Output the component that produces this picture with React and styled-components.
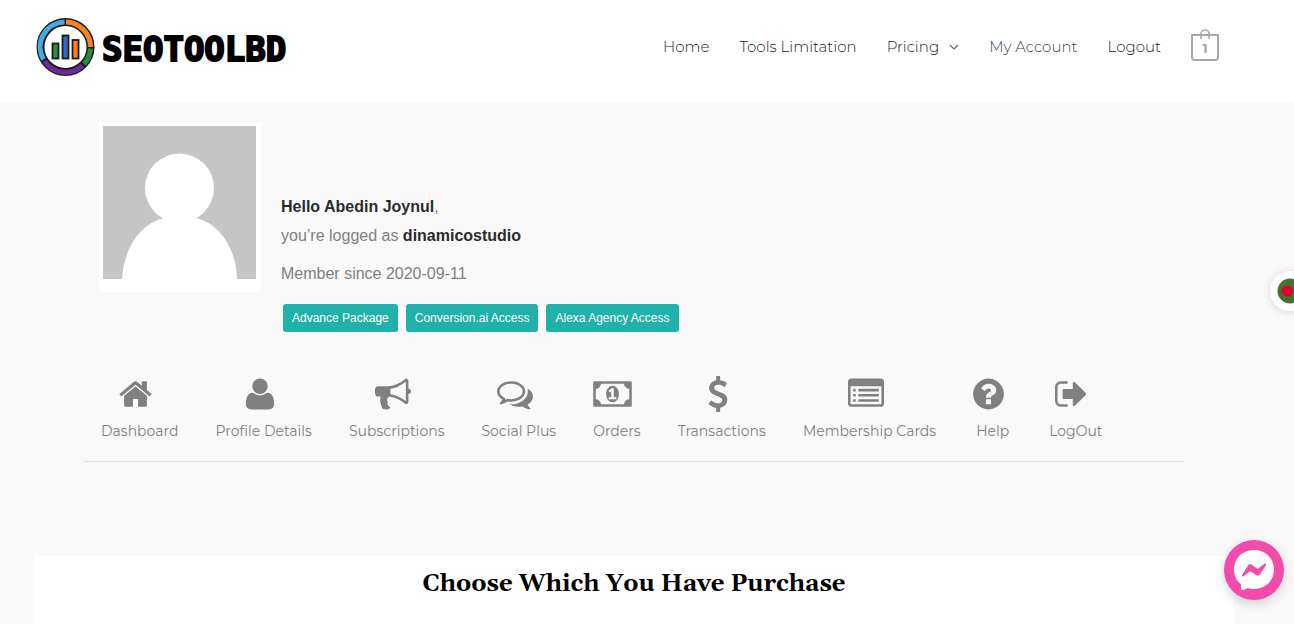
import React from "react";
import styled, { createGlobalStyle } from "styled-components";

const GlobalStyle = createGlobalStyle`
  * { box-sizing: border-box; }
  body {
    margin: 0;
    background: #f9f9f9;
    color: #808080;
    font-family: Arial, "Liberation Sans", sans-serif;
    font-size: 16px;
    overflow-x: hidden;
  }
  a { color: inherit; text-decoration: none; }
  p { margin: 0; }
`;

const brandFont = `Montserrat, Inter, sans-serif`;

const Header = styled.header`
  background: #fff;
  padding: 18px 75px 26px 36px;
  display: flex;
  align-items: center;
  justify-content: space-between;
`;

const Logo = styled.a`
  display: flex;
  align-items: center;
  gap: 7px;
`;

const Wordmark = styled.span`
  padding-top: 4px;
  color: #000;
  font: bold 34px/54px "DejaVu Sans Mono", monospace;
  -webkit-text-stroke: 2px #000;
`;

const Menu = styled.nav`
  display: flex;
  align-items: center;
  gap: 30px;
  font: 300 15px/24px ${brandFont};
  color: #222;
`;

const MenuLink = styled.a`
  display: flex;
  align-items: center;
  gap: 10px;
  white-space: nowrap;
  color: ${(p) => (p.$current ? "#3a4452" : "inherit")};
`;

const Cart = styled.a`
  position: relative;
  width: 28px;
  height: 32px;
  margin-top: -4px;
  padding-top: 7px;
  text-align: center;
  font: 700 13px/24px ${brandFont};
  color: #a3a3a3;

  svg {
    position: absolute;
    inset: 0;
  }
`;

const Page = styled.main`
  padding: 20px 60px 0 34px;
`;

const Account = styled.section`
  margin: 0 50px;
  border-bottom: 1px solid #e2e2e2;
  padding: 0 15px 20px;
`;

const Profile = styled.div`
  display: flex;
  align-items: flex-start;
  gap: 20px;
`;

const Avatar = styled.div`
  background: #fff;
  padding: 4px 5px 13px 4px;

  svg { display: block; }
`;

const Details = styled.div`
  padding-top: 70px;
  line-height: 29px;

  strong { color: #2b2b2b; }
`;

const Since = styled.p`
  padding: 9px 0 16px;
`;

const Tags = styled.div`
  display: flex;
  flex-wrap: wrap;
  gap: 8px;
  padding-left: 2px;
`;

const Tag = styled.span`
  background: #20b2aa;
  color: #fff;
  border-radius: 3px;
  padding: 0 9px;
  font-size: 12px;
  line-height: 28px;
`;

const Tabs = styled.nav`
  display: flex;
  flex-wrap: wrap;
  gap: 37px;
  padding: 44px 0 0 2px;
`;

const Tab = styled.a`
  display: flex;
  flex-direction: column;
  align-items: center;
  gap: 9px;
  font: 400 14px/20px ${brandFont};
  white-space: nowrap;

  svg {
    display: block;
    fill: #808080;
    margin-right: 8px;
  }
`;

const Panel = styled.section`
  margin-top: 94px;
  min-height: 68px;
  background: #fff;
  padding: 11px 0;
`;

const Heading = styled.h2`
  margin: 0;
  text-align: center;
  color: #000;
  font: bold 24px/34px Gelasio, Georgia, "Liberation Serif", serif;
`;

const FloatingButton = styled.button`
  position: fixed;
  display: grid;
  place-items: center;
  border: 0;
  padding: 0;
  border-radius: 50%;
`;

const ChatButton = styled(FloatingButton)`
  right: 10px;
  bottom: 24px;
  width: 60px;
  height: 60px;
  background: #f24bab;
  box-shadow: 0 4px 12px rgba(0, 0, 0, 0.16);
`;

const LanguageButton = styled(FloatingButton)`
  right: -16px;
  top: 271px;
  width: 40px;
  height: 40px;
  background: #fff;
  box-shadow: 0 1px 8px rgba(0, 0, 0, 0.14);
`;

const menuItems = [
  { label: "Home" },
  { label: "Tools Limitation" },
  { label: "Pricing", dropdown: true },
  { label: "My Account", current: true },
  { label: "Logout" },
];

const tags = ["Advance Package", "Conversion.ai Access", "Alexa Agency Access"];

const tabs = [
  {
    label: "Dashboard",
    x: 64,
    w: 1664,
    d: "M1472 992v480q0 26-19 45t-45 19h-384v-384h-256v384h-384q-26 0-45-19t-19-45v-480q0-1 .5-3t.5-3l575-474 575 474q1 2 1 6zm223-69l-62 74q-8 9-21 11h-3q-13 0-21-7l-692-577-692 577q-12 8-24 7-13-2-21-11l-62-74q-8-10-7-23.5t11-21.5l719-599q32-26 76-26t76 26l244 204v-195q0-14 9-23t23-9h192q14 0 23 9t9 23v408l219 182q10 8 11 21.5t-7 23.5z",
  },
  {
    label: "Profile Details",
    d: "M1600 1405q0 120-73 189.5t-194 69.5h-874q-121 0-194-69.5t-73-189.5q0-53 3.500-103.500t14-109 26.500-108.500 43-97.500 62-81 85.500-53.500 111.500-20q9 0 42 21.500t74.500 48 108 48 133.500 21.500 133.500-21.500 108-48 74.500-48 42-21.500q61 0 111.500 20t85.500 53.500 62 81 43 97.500 26.500 108.500 14 109 3.500 103.500zm-320-893q0 159-112.500 271.500t-271.500 112.500-271.500-112.500-112.500-271.500 112.500-271.500 271.500-112.500 271.500 112.500 112.500 271.500z",
  },
  {
    label: "Subscriptions",
    d: "M1664 640q53 0 90.5 37.5t37.5 90.5-37.5 90.5-90.5 37.5v384q0 52-38 90t-90 38q-417-347-812-380-58 19-91 66t-31 100.5 40 92.5q-20 33-23 65.500t6 58 33.500 55 48 50 61.500 50.500q-29 58-111.500 83t-168.500 11.500-132-55.500q-7-23-29.500-87.500t-32-94.500-23-89-15-101 3.500-98.500 22-110.500h-122q-66 0-113-47t-47-113v-192q0-66 47-113t113-47h480q435 0 896-384 52 0 90 38t38 90v384zm-128 604v-954q-394 302-768 343v270q377 42 768 341z",
  },
  {
    label: "Social Plus",
    d: "M704 384q-153 0-286 52t-211.5 141-78.5 191q0 82 53 158t149 132l97 56-35 84q34-20 62-39l44-31 53 10q78 14 153 14 153 0 286-52t211.5-141 78.5-191-78.5-191-211.5-141-286-52zm0-128q191 0 353.5 68.5t256.5 186.5 94 257-94 257-256.5 186.5-353.5 68.5q-86 0-176-16-124 88-278 128-36 9-86 16h-3q-11 0-20.5-8t-11.5-21q-1-3-1-6.5t.5-6.5 2-6l2.5-5 3.5-5.5 4-5 4.5-5 4-4.5q5-6 23-25t26-29.5 22.5-29 25-38.5 20.5-44q-124-72-195-177t-71-224q0-139 94-257t256.5-186.5 353.5-68.5zm822 1169q10 24 20.5 44t25 38.5 22.5 29 26 29.5 23 25q1 1 4 4.5t4.5 5 4 5 3.5 5.5l2.5 5 2 6 .5 6.5-1 6.5q-3 14-13 22t-22 7q-50-7-86-16-154-40-278-128-90 16-176 16-271 0-472-132 58 4 88 4 161 0 309-45t264-129q125-92 192-212t67-254q0-77-23-152 129 71 204 178t75 230q0 120-71 224.5t-195 176.5z",
  },
  {
    label: "Orders",
    w: 1920,
    d: "M768 1152h384v-96h-128v-448h-114l-148 137 77 80q42-37 55-57h2v288h-128v96zm512-256q0 70-21 142t-59.5 134-101.5 101-138 39-138-39-101.5-101-59.5-134-21-142 21-142 59.5-134 101.5-101 138-39 138 39 101.5 101 59.5 134 21 142zm512 256v-512q-106 0-181-75t-75-181h-1152q0 106-75 181t-181 75v512q106 0 181 75t75 181h1152q0-106 75-181t181-75zm128-832v1152q0 26-19 45t-45 19h-1792q-26 0-45-19t-19-45v-1152q0-26 19-45t45-19h1792q26 0 45 19t19 45z",
  },
  {
    label: "Transactions",
    d: "M1362 1185q0 153-99.5 263.5t-258.5 136.5v175q0 14-9 23t-23 9h-135q-13 0-22.5-9.5t-9.5-22.5v-175q-66-9-127.5-31t-101.5-44.5-74-48-46.5-37.5-17.5-18q-17-21-2-41l103-135q7-10 23-12 15-2 24 9l2 2q113 99 243 125 37 8 74 8 81 0 142.5-43t61.5-122q0-28-15-53t-33.5-42-58.5-37.5-66-32-80-32.5q-39-16-61.5-25t-61.5-26.5-62.5-31-56.5-35.5-53.5-42.5-43.5-49-35.5-58-21-66.5-8.5-78q0-138 98-242t255-134v-180q0-13 9.5-22.5t22.5-9.5h135q14 0 23 9t9 23v176q57 6 110.5 23t87 33.5 63.5 37.5 39 29 15 14q17 18 5 38l-81 146q-8 15-23 16-14 3-27-7-3-3-14.5-12t-39-26.5-58.5-32-74.5-26-85.5-11.5q-95 0-155 43t-60 111q0 26 8.5 48t29.5 41.5 39.5 33 56 31 60.5 27 70 27.5q53 20 81 31.5t76 35 75.5 42.5 62 50 53 63.5 31.5 76.5 13 94z",
  },
  {
    label: "Membership Cards",
    d: "M256 1152h128v128h-128zM256 896h128v128h-128zM256 640h128v128h-128zM512 1152h1024v128h-1024zM512 896h1024v128h-1024zM512 640h1024v128h-1024zM1664 1376v-832q0-13-9.500-22.500t-22.500-9.500h-1472q-13 0-22.500 9.500t-9.500 22.500v832q0 13 9.500 22.500t22.500 9.500h1472q13 0 22.500-9.500t9.500-22.500zm128-1088v1088q0 66-47 113t-113 47h-1472q-66 0-113-47t-47-113v-1088q0-66 47-113t113-47h1472q66 0 113 47t47 113z",
  },
  {
    label: "Help",
    x: 128,
    w: 1536,
    d: "M1024 1376v-192q0-14-9-23t-23-9h-192q-14 0-23 9t-9 23v192q0 14 9 23t23 9h192q14 0 23-9t9-23zm256-672q0-88-55.5-163t-138.5-116-170-41q-243 0-371 213-15 24 8 42l132 100q7 6 19 6 16 0 25-12 53-68 86-92 34-24 86-24 48 0 85.5 26t37.5 59q0 38-20 61t-68 45q-63 28-115.5 86.5t-52.5 125.5v36q0 14 9 23t23 9h192q14 0 23-9t9-23q0-19 21.5-49.5t54.5-49.5q32-18 49-28.500t46-35 44.500-48 28-60.500 12.500-81zm384 192q0 209-103 385.500t-279.500 279.500-385.500 103-385.500-103-279.500-279.500-103-385.500 103-385.500 279.500-279.500 385.500-103 385.500 103 279.500 279.500 103 385.500z",
  },
  {
    label: "LogOut",
    x: 64,
    w: 1664,
    d: "M704 1440q0 4 1 20t.5 26.5-3 23.5-10 19.5-20.5 6.5h-320q-119 0-203.5-84.5t-84.5-203.5v-704q0-119 84.5-203.5t203.5-84.5h320q13 0 22.5 9.5t9.5 22.5q0 4 1 20t.5 26.5-3 23.5-10 19.5-20.5 6.5h-320q-66 0-113 47t-47 113v704q0 66 47 113t113 47h312l11.5 1 11.5 3 8 5.5 7 9 2 13.5zm928-544q0 26-19 45l-544 544q-19 19-45 19t-45-19-19-45v-288h-448q-26 0-45-19t-19-45v-384q0-26 19-45t45-19h448v-288q0-26 19-45t45-19 45 19l544 544q19 19 19 45z",
  },
];

function LogoMark() {
  return (
    <svg width="59" height="58" viewBox="0 0 59 58" fill="none" aria-hidden="true">
      <circle cx="29.500" cy="29" r="25" stroke="#1c1c1c" strokeWidth="8" />
      <g strokeWidth="5">
        <path d="M30 4A25 25 0 0 1 54.500 29" stroke="#f5851f" />
        <path d="M54.500 30.500A25 25 0 0 1 48 46" stroke="#2b8a3e" />
        <path d="M46.500 47.500A25 25 0 0 1 8.500 43" stroke="#6a2a9c" />
        <path d="M7.500 41.500A25 25 0 0 1 28.500 4" stroke="#4aa8e0" />
      </g>
      <g stroke="#1c1c1c" strokeWidth="1.800">
        <rect x="16.500" y="25.500" width="6" height="15" fill="#2b8f3e" />
        <rect x="26.500" y="17.500" width="6" height="23" fill="#2f6cc4" />
        <rect x="36.500" y="22" width="6" height="18.500" fill="#f5851f" />
      </g>
    </svg>
  );
}

function TabIcon({ x = 0, w = 1792, d }) {
  return (
    <svg width={Math.round((w * 36) / 1792)} height="36" viewBox={`${x} 0 ${w} 1792`} aria-hidden="true">
      <path d={d} />
    </svg>
  );
}

export default function App() {
  return (
    <>
      <GlobalStyle />
      <Header>
        <Logo href="#">
          <LogoMark />
          <Wordmark>SEOTOOLBD</Wordmark>
        </Logo>
        <Menu aria-label="Main">
          {menuItems.map((item) => (
            <MenuLink key={item.label} href="#" $current={item.current}>
              {item.label}
              {item.dropdown && (
                <svg width="10" height="6" viewBox="0 0 10 6" fill="none" stroke="#666" strokeWidth="1.200" aria-hidden="true">
                  <path d="M1 1l4 4 4-4" />
                </svg>
              )}
            </MenuLink>
          ))}
          <Cart href="#" aria-label="Cart, 1 item">
            <svg width="28" height="32" viewBox="0 0 28 32" fill="none" stroke="#a8a8a8" strokeWidth="2" aria-hidden="true">
              <path d="M1 6h26v22.500a2.500 2.500 0 0 1-2.500 2.500h-21a2.500 2.500 0 0 1-2.500-2.500z" />
              <path d="M10 10V5a4 4 0 0 1 8 0v5" strokeWidth="1.600" />
            </svg>
            1
          </Cart>
        </Menu>
      </Header>
      <Page>
        <Account>
          <Profile>
            <Avatar>
              <svg width="153" height="153" viewBox="0 0 153 153" role="img" aria-label="Profile picture">
                <rect width="153" height="153" fill="#c5c5c5" />
                <circle cx="76.500" cy="62" r="34.500" fill="#fff" />
                <path d="M19 153C21 122 37 98 61 92q15-5 32 0C117 98 133 122 134 153z" fill="#fff" />
              </svg>
            </Avatar>
            <Details>
              <p><strong>Hello Abedin Joynul</strong>,</p>
              <p>you’re logged as <strong>dinamicostudio</strong></p>
              <Since>Member since 2020-09-11</Since>
              <Tags>
                {tags.map((tag) => <Tag key={tag}>{tag}</Tag>)}
              </Tags>
            </Details>
          </Profile>
          <Tabs aria-label="Account">
            {tabs.map(({ label, ...icon }) => (
              <Tab key={label} href="#">
                <TabIcon {...icon} />
                {label}
              </Tab>
            ))}
          </Tabs>
        </Account>
        <Panel>
          <Heading>Choose Which You Have Purchase</Heading>
        </Panel>
      </Page>
      <LanguageButton type="button" aria-label="Language">
        <svg width="26" height="26" viewBox="0 0 26 26" aria-hidden="true">
          <circle cx="13" cy="13" r="12.500" fill="#4a7031" />
          <circle cx="10" cy="13" r="5.500" fill="#e0002b" />
        </svg>
      </LanguageButton>
      <ChatButton type="button" aria-label="Messenger chat">
        <svg width="40" height="40" viewBox="0 0 40 40" aria-hidden="true">
          <path d="M20 0C8.500 0 0 8.300 0 19.400c0 5.900 2.400 11 6.500 14.500.3.300.5.700.5 1.200l.1 3.600c0 1.100 1.200 1.900 2.200 1.400l4-1.800c.4-.1.700-.2 1.100-.1 1.800.5 3.700.7 5.600.7C31.500 38.900 40 30.600 40 19.400S31.500 0 20 0z" fill="#fff" />
          <path d="M8 25.100l5.900-9.300c.9-1.500 2.900-1.900 4.300-.8l4.700 3.500c.4.300 1 .3 1.400 0l6.300-4.800c.8-.6 1.900.4 1.400 1.300l-5.900 9.300c-.9 1.500-2.900 1.800-4.300.8l-4.700-3.500c-.4-.3-1-.3-1.400 0l-6.300 4.800c-.8.600-1.900-.4-1.400-1.300z" fill="#f24bab" />
        </svg>
      </ChatButton>
    </>
  );
}
